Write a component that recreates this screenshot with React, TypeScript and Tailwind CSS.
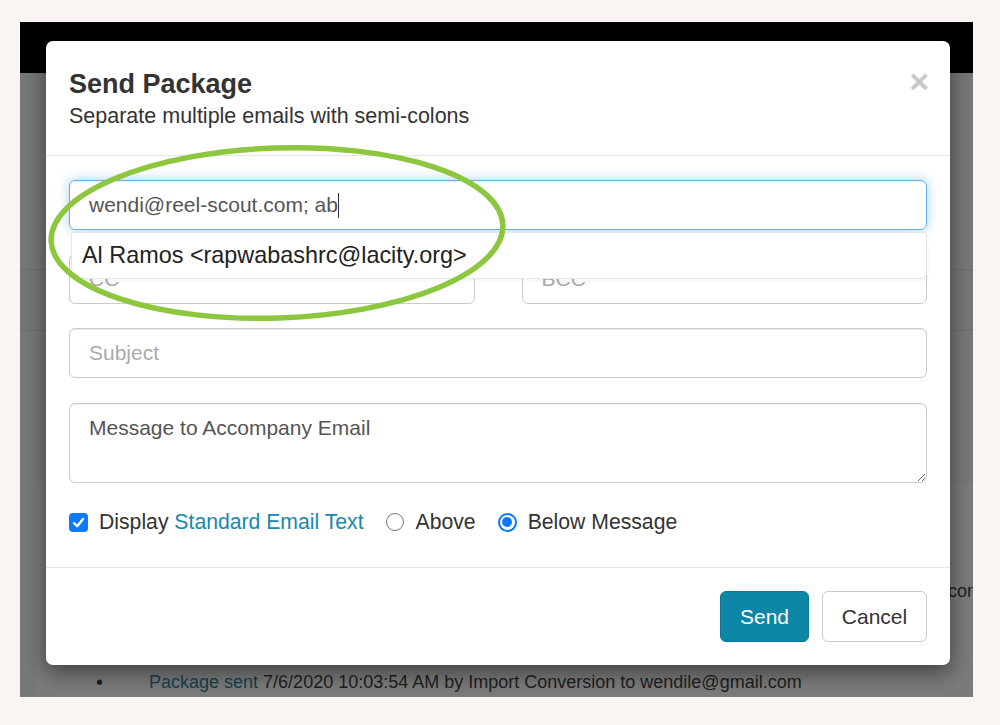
import React from "react";

function BackgroundPage() {
  return (
    <div className="flex h-full flex-col">
      <div className="h-[51px] bg-black" />
      <div className="mt-[196px] h-[62px] border-y border-[#6c6c6c] bg-[#777]" />
      <div className="mt-[152px] ml-[16px] flex flex-1 flex-col bg-[#7b7b7b] text-[18px] text-[#1e1e1e]">
        <div className="mt-[96px] flex h-[24px] items-center justify-end whitespace-nowrap leading-[24px] mr-[-9px]">
          Package sent 7/6/2020 10:03:54 AM by Import Conversion to wendi@reel-scout.com
        </div>
        <div className="mt-[67px] flex h-[24px] items-center whitespace-nowrap pl-[60px] leading-[24px]">
          <span className="mr-[46px] text-[20px]">•</span>
          <span className="text-[#173f4c]">Package sent</span>
          <span>&nbsp;7/6/2020 10:03:54 AM by Import Conversion to wendile@gmail.com</span>
        </div>
      </div>
    </div>
  );
}

function TextInput({ placeholder }: { placeholder: string }) {
  return (
    <input
      readOnly
      placeholder={placeholder}
      className="h-[50px] w-full rounded-[6px] border border-[#ccc] bg-white px-[19px] text-[21px] text-[#555] shadow-[inset_0_1px_1px_rgba(0,0,0,0.075)] outline-none placeholder:text-[#aaa]"
    />
  );
}

export default function App() {
  return (
    <div className="h-[725px] w-[1000px] bg-[#faf4f3] pl-[20px] pt-[22px] font-['Liberation_Sans',Arial,sans-serif]">
      <div className="relative h-[675px] w-[953px] overflow-hidden bg-[#787878]">
        <BackgroundPage />

        {/* modal */}
        <div className="absolute left-[26px] top-[19px] flex h-[624px] w-[904px] flex-col rounded-[7px] bg-white shadow-[0_7px_22px_rgba(0,0,0,0.5)]">
          <div className="flex items-start justify-between border-b border-[#e5e5e5] px-[23px] pb-[24px] pt-[28px] text-[#333]">
            <div>
              <h4 className="text-[27px] font-bold leading-[30px]">Send Package</h4>
              <p className="mt-[2px] text-[21.5px] leading-[30px]">Separate multiple emails with semi-colons</p>
            </div>
            <button className="-mr-[2px] -mt-[5px] text-[34px] font-bold leading-none text-[#c8c8c8]">×</button>
          </div>

          <div className="flex flex-col px-[23px] pb-[31px] pt-[24px]">
            <div className="relative">
              <div className="flex h-[50px] items-center rounded-[6px] border border-[#66afe9] px-[19px] text-[21px] text-[#555] shadow-[inset_0_1px_1px_rgba(0,0,0,0.075),0_0_12px_rgba(102,175,233,0.6)]">
                <span>wendi@reel-scout.com; ab</span>
                <span className="inline-block h-[25px] w-px bg-[#333]" />
              </div>
              <div className="absolute left-[2px] right-0 top-[52px] z-10 flex h-[47px] items-center rounded-b-[6px] rounded-t-[3px] border border-[#e8e8e8] bg-white pl-[10px] text-[23.4px] text-[#222] shadow-[0_2px_4px_rgba(0,0,0,0.05)]">
                Al Ramos &lt;rapwabashrc@lacity.org&gt;
              </div>
            </div>

            <div className="mt-[24px] grid grid-cols-2 gap-x-[47px]">
              <TextInput placeholder="CC" />
              <TextInput placeholder="BCC" />
            </div>

            <div className="mt-[24px]">
              <TextInput placeholder="Subject" />
            </div>

            <textarea
              readOnly
              placeholder="Message to Accompany Email"
              className="mt-[25px] block h-[80px] w-full rounded-[6px] border border-[#ccc] px-[19px] pt-[9px] text-[21px] leading-[30px] text-[#555] shadow-[inset_0_1px_1px_rgba(0,0,0,0.075)] outline-none placeholder:text-[#555]"
            />

            <div className="mt-[25px] flex h-[28px] items-center text-[21.2px] text-[#333]">
              <span className="flex h-[19px] w-[19px] items-center justify-center rounded-[4px] bg-[#0b7aff]">
                <svg width="13" height="13" viewBox="0 0 13 13" fill="none">
                  <path d="M2 7 L5.2 10.2 L11 3" stroke="white" strokeWidth="2.4" strokeLinecap="round" strokeLinejoin="round" />
                </svg>
              </span>
              <span className="ml-[11px]">Display&nbsp;</span>
              <a className="text-[#168aad]">Standard Email Text</a>
              <span className="ml-[22px] h-[18px] w-[18px] rounded-full border border-[#767676] bg-white" />
              <span className="ml-[12px]">Above</span>
              <span className="ml-[22px] flex h-[19px] w-[19px] items-center justify-center rounded-full bg-[#0b7aff]">
                <span className="flex h-[15px] w-[15px] items-center justify-center rounded-full bg-white">
                  <span className="h-[10px] w-[10px] rounded-full bg-[#0b7aff]" />
                </span>
              </span>
              <span className="ml-[11px]">Below Message</span>
            </div>
          </div>

          <div className="flex justify-end gap-[13px] border-t border-[#e5e5e5] px-[23px] pb-[22px] pt-[23px]">
            <button className="h-[51px] w-[89px] rounded-[6px] border border-[#0c7894] bg-[#0e86a6] text-[21px] text-white">Send</button>
            <button className="h-[51px] w-[105px] rounded-[6px] border border-[#ccc] bg-white text-[21px] text-[#333]">Cancel</button>
          </div>
        </div>

        {/* hand-drawn annotation */}
        <svg className="pointer-events-none absolute inset-0 z-20" width="953" height="675">
          <ellipse cx="257" cy="211" rx="226" ry="85" transform="rotate(-2 257 211)" fill="none" stroke="#8dc63f" strokeWidth="5.5" />
        </svg>
      </div>
    </div>
  );
}
